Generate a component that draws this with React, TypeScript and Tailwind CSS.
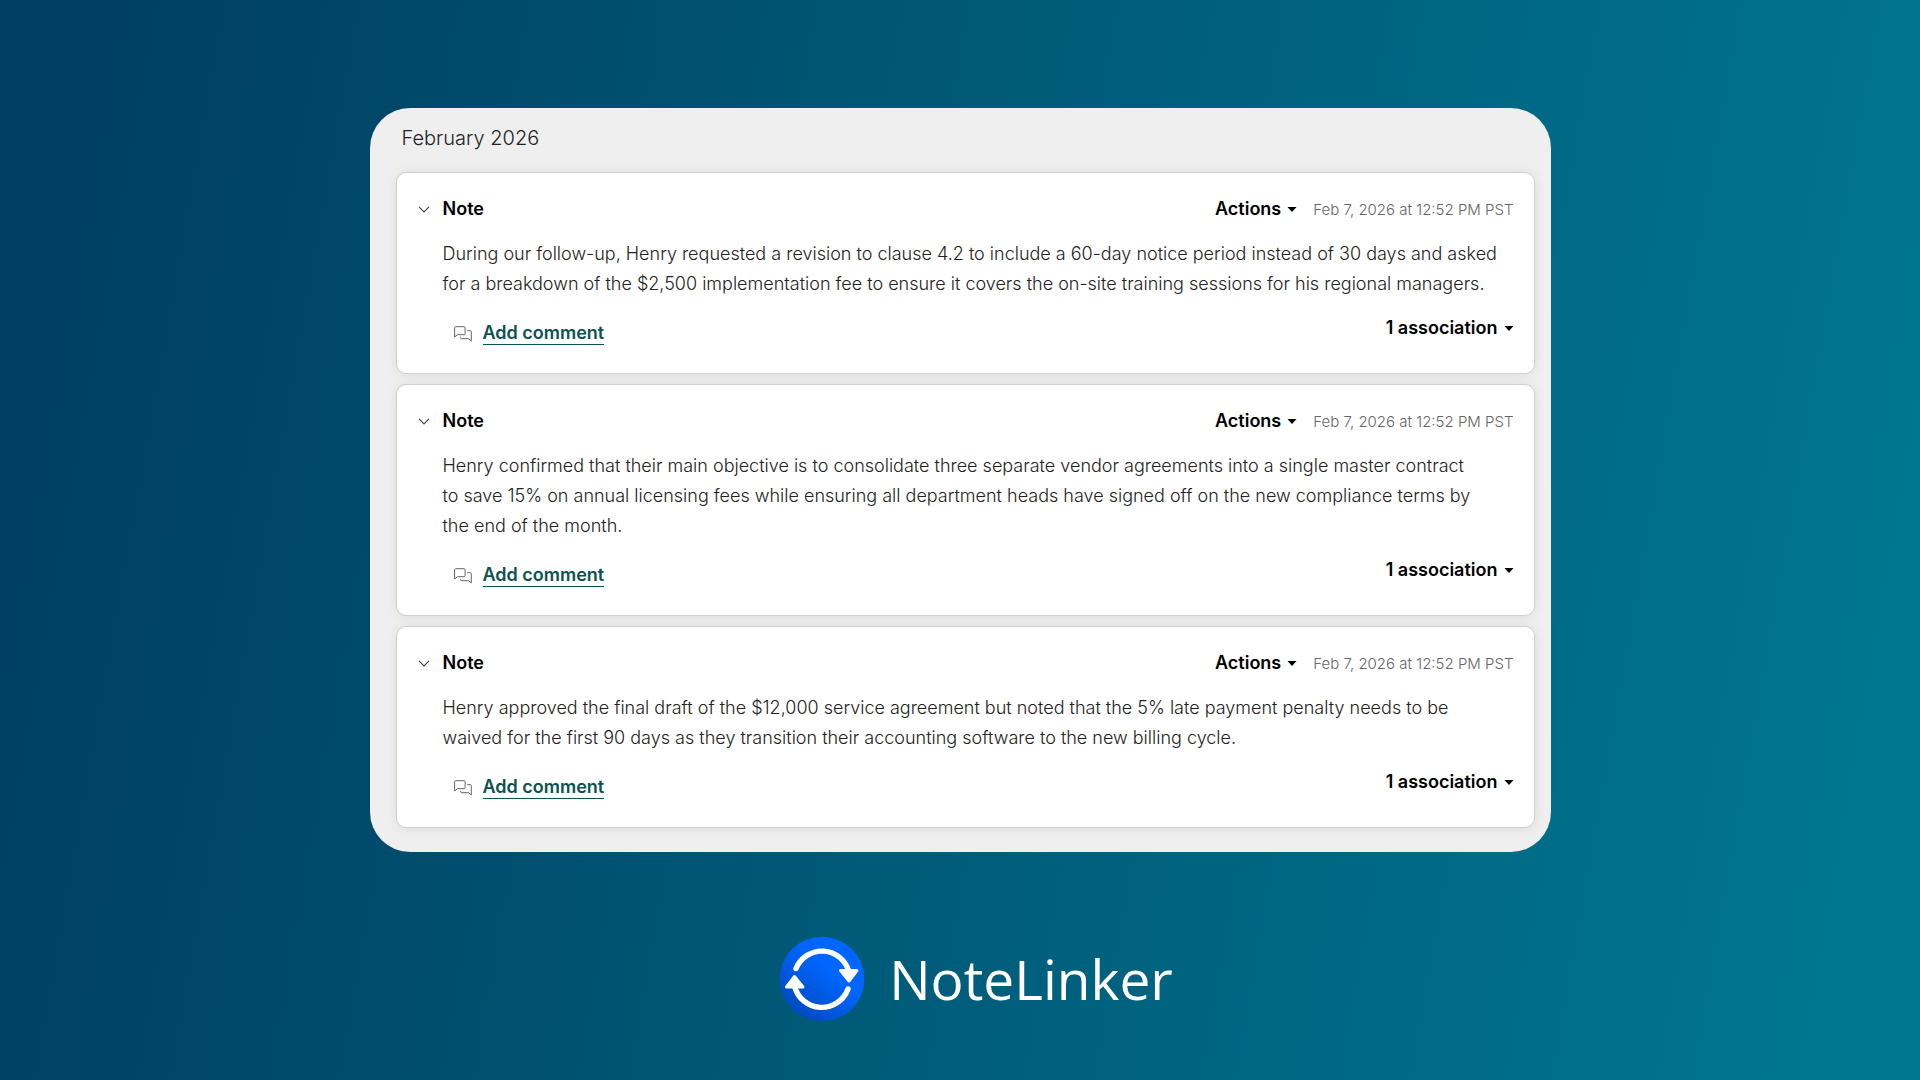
import React from 'react';

interface Note {
  id: number;
  date: string;
  body: string;
}

const notes: Note[] = [
  {
    id: 1,
    date: 'Feb 7, 2026 at 12:52 PM PST',
    body: 'During our follow-up, Henry requested a revision to clause 4.2 to include a 60-day notice period instead of 30 days and asked\nfor a breakdown of the $2,500 implementation fee to ensure it covers the on-site training sessions for his regional managers.',
  },
  {
    id: 2,
    date: 'Feb 7, 2026 at 12:52 PM PST',
    body: 'Henry confirmed that their main objective is to consolidate three separate vendor agreements into a single master contract\nto save 15% on annual licensing fees while ensuring all department heads have signed off on the new compliance terms by\nthe end of the month.',
  },
  {
    id: 3,
    date: 'Feb 7, 2026 at 12:52 PM PST',
    body: 'Henry approved the final draft of the $12,000 service agreement but noted that the 5% late payment penalty needs to be\nwaived for the first 90 days as they transition their accounting software to the new billing cycle.',
  },
];

const Caret = () => (
  <svg width="10" height="5" viewBox="0 0 10 5" fill="currentColor" aria-hidden="true">
    <path d="M0.5 0h9L5 5z" />
  </svg>
);

const CommentIcon = () => (
  <svg width="18" height="16" viewBox="0 0 18 16" fill="none" stroke="#666" strokeWidth="1" strokeLinejoin="round" aria-hidden="true">
    <path d="M1.5.7h8.6a1 1 0 0 1 1 1v6a1 1 0 0 1-1 1H3.6L.6 11V1.7a1 1 0 0 1 .9-1z" />
    <path d="M13.2 4.7h3.1a1 1 0 0 1 1 1v9.2l-3-2.2H7.7a1 1 0 0 1-1-1v-.9" />
  </svg>
);

const NoteCard: React.FC<{ note: Note }> = ({ note }) => (
  <article className="rounded-[10px] border border-[#cfcfcf] bg-white pt-6 pr-5 pb-7 pl-[21px] shadow-[0_1px_12px_rgba(0,0,0,0.08)]">
    <header className="flex items-baseline">
      <button type="button" aria-label="Collapse note" className="w-[25px] self-center text-[#444]">
        <svg width="12" height="7" viewBox="0 0 12 7" fill="none" stroke="currentColor" strokeWidth="1.2" aria-hidden="true">
          <path d="M1 .8l5 5 5-5" />
        </svg>
      </button>
      <h2 className="text-lg leading-6 font-semibold">Note</h2>
      <button type="button" className="ml-auto flex items-center gap-1.5 text-lg leading-6 font-semibold">
        Actions
        <Caret />
      </button>
      <time className="ml-4 text-[15px] leading-6 font-light text-[#666]">{note.date}</time>
    </header>
    <p className="mt-[17px] pl-[25px] text-lg leading-[30px] font-light whitespace-pre-line text-[#222]">{note.body}</p>
    <footer className="mt-[17px] flex items-start justify-between pl-9">
      <div className="flex items-center gap-[11px] pt-1.5">
        <CommentIcon />
        <a href="#comment" className="border-b border-[#0b5152] text-lg leading-[22px] font-semibold text-[#0b5152]">Add comment</a>
      </div>
      <button type="button" className="flex items-center gap-1.5 text-lg leading-6 font-semibold">
        1 association
        <Caret />
      </button>
    </footer>
  </article>
);

const Logo = () => (
  <svg width="86" height="86" viewBox="0 0 86 86" aria-hidden="true">
    <defs>
      <linearGradient id="disc" x1="0.15" y1="0.95" x2="0.6" y2="0.4">
        <stop offset="0" stopColor="#0047b8" />
        <stop offset="1" stopColor="#0066ff" />
      </linearGradient>
    </defs>
    <circle cx="43" cy="43" r="42.3" fill="url(#disc)" />
    <g fill="none" stroke="#fff" strokeWidth="5.4" strokeLinecap="round">
      <path d="M17 32.500A28 28 0 0 1 70 36" />
      <path d="M69 53A28 28 0 0 1 15.500 50" />
    </g>
    <g fill="#fff" stroke="#fff" strokeWidth="3" strokeLinejoin="round">
      <path d="M61.500 34.500h16.500L70 45z" />
      <path d="M15.500 40.500L7.500 51h16.500z" />
    </g>
  </svg>
);

const App: React.FC = () => (
  <div className="flex min-h-screen flex-col items-center bg-linear-[100deg,#003f63_5%,#005b79_50%,#007690_95%] px-6 pt-[108px] font-[Inter,sans-serif] text-black">
    <main className="w-full max-w-[1181px] rounded-[40px] bg-[#efefef] pt-4 pr-4 pb-6 pl-[26px]">
      <h1 className="pl-1.5 text-xl leading-7 font-light text-[#222]">February 2026</h1>
      <div className="mt-5 flex flex-col gap-2.5">
        {notes.map(note => (
          <NoteCard key={note.id} note={note} />
        ))}
      </div>
    </main>
    <div className="mt-[84px] flex items-center gap-6 pl-8">
      <Logo />
      <span className="font-[Open_Sans,sans-serif] text-[55px] leading-[64px] text-white">NoteLinker</span>
    </div>
  </div>
);

export default App;
